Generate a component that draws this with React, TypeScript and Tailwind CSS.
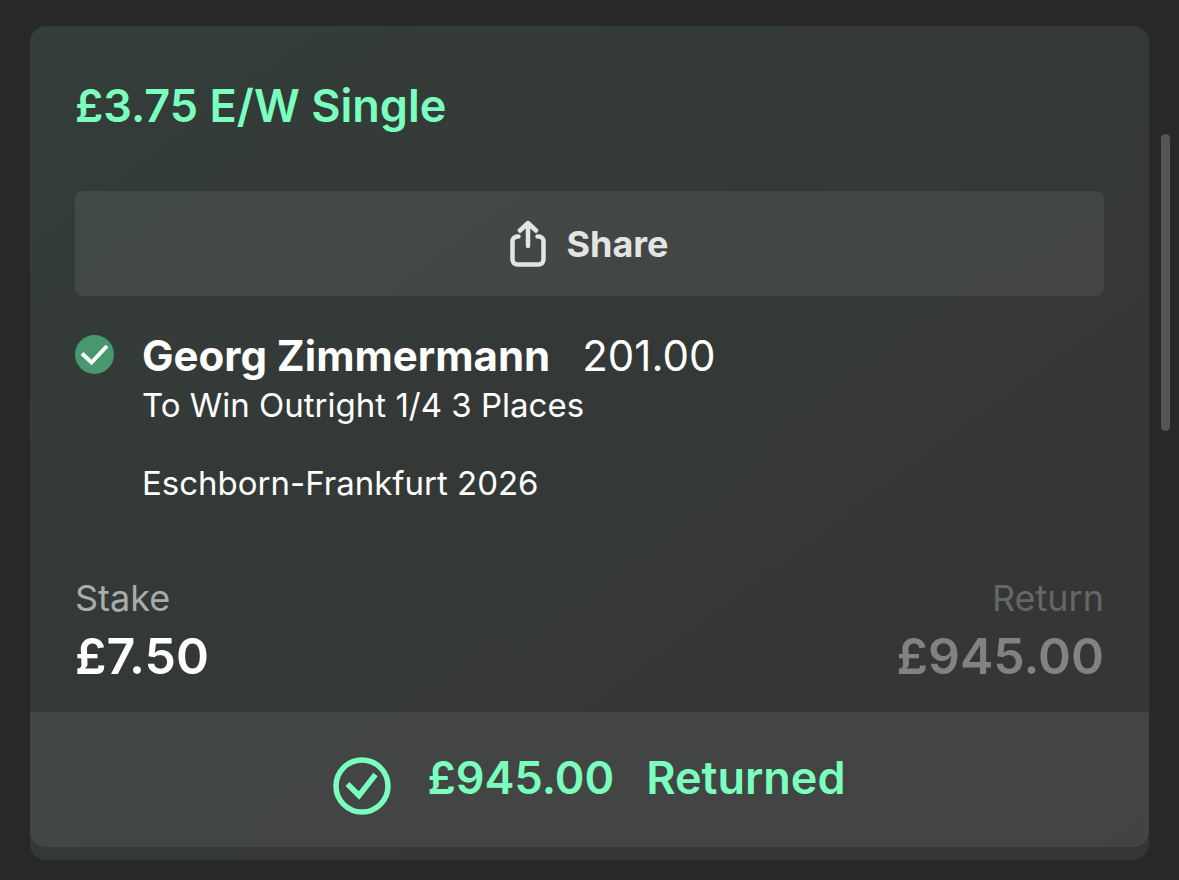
interface BetSlip {
  title: string;
  selection: string;
  odds: string;
  market: string;
  event: string;
  stake: string;
  returns: string;
}

const bet: BetSlip = {
  title: "£3.75 E/W Single",
  selection: "Georg Zimmermann",
  odds: "201.00",
  market: "To Win Outright 1/4 3 Places",
  event: "Eschborn-Frankfurt 2026",
  stake: "£7.50",
  returns: "£945.00",
};

function ShareIcon() {
  return (
    <svg
      className="h-12 w-9 shrink-0"
      viewBox="0 0 36 48"
      fill="none"
      stroke="currentColor"
      strokeWidth="4.500"
      strokeLinecap="round"
      strokeLinejoin="round"
      aria-hidden="true"
    >
      <path d="M8.500 16.500H7.500a5 5 0 0 0-5 5v18a5 5 0 0 0 5 5h21a5 5 0 0 0 5-5v-18a5 5 0 0 0-5-5H27.500" />
      <path d="M18 26V3M10 10.500l8-7.500 8 7.500" />
    </svg>
  );
}

function WonIcon() {
  return (
    <svg className="size-[39px] shrink-0" viewBox="0 0 39 39" fill="none" aria-hidden="true">
      <circle cx="19.500" cy="19.500" r="19.500" fill="#47986f" />
      <path d="M7 18.500l9.500 9L32 11" stroke="#ffffff" strokeWidth="4" />
    </svg>
  );
}

function ReturnedIcon() {
  return (
    <svg
      className="size-[58px] shrink-0"
      viewBox="0 0 58 58"
      fill="none"
      stroke="currentColor"
      strokeWidth="5.500"
      aria-hidden="true"
    >
      <circle cx="29" cy="29" r="26" />
      <path d="M14.500 27l11.500 11.500L42.500 17.500" />
    </svg>
  );
}

export default function App() {
  return (
    <main className="relative min-h-screen bg-[#282828] px-[30px] pt-[26px] pb-5 font-['Inter',sans-serif] text-white">
      <article className="rounded-2xl bg-linear-to-br from-[#333d39] via-[#343836] to-[#353535] pb-[13px]">
        <div className="px-[45px] pt-[52px] pb-[22px]">
          <h1 className="text-[45px] leading-14 font-semibold text-[#7affbe]">{bet.title}</h1>

          <button
            type="button"
            className="mt-[57px] flex h-[105px] w-full items-center justify-center gap-5 rounded-lg bg-white/7 text-4xl leading-12 font-bold text-[#e3e5e4]"
          >
            <ShareIcon />
            Share
          </button>

          <section className="mt-8 flex gap-7">
            <div className="pt-[7px]">
              <WonIcon />
            </div>
            <div>
              <div className="flex gap-8 text-[42px] leading-14">
                <h2 className="font-bold">{bet.selection}</h2>
                <span>{bet.odds}</span>
              </div>
              <p className="text-[33px] leading-[42px]">{bet.market}</p>
              <p className="mt-9 text-[33px] leading-[42px]">{bet.event}</p>
            </div>
          </section>

          <dl className="mt-[70px] flex justify-between">
            <div>
              <dt className="text-4xl leading-12 text-[#a9acab]">Stake</dt>
              <dd className="text-[50px] leading-[68px] font-semibold">{bet.stake}</dd>
            </div>
            <div className="text-right">
              <dt className="text-4xl leading-12 text-[#656766]">Return</dt>
              <dd className="text-[50px] leading-[68px] font-semibold text-[#818282]">{bet.returns}</dd>
            </div>
          </dl>
        </div>

        <footer className="flex h-[135px] items-start justify-center gap-9 rounded-b-2xl bg-white/7 pt-[45px] text-[45px] leading-[42px] font-semibold text-[#7affbe]">
          <ReturnedIcon />
          <p className="flex gap-8">
            <span>{bet.returns}</span>
            <span>Returned</span>
          </p>
        </footer>
      </article>

      {/* scroll thumb */}
      <div className="absolute top-[134px] right-[9px] h-[297px] w-[9px] rounded-full bg-[#555555]" />
    </main>
  );
}
